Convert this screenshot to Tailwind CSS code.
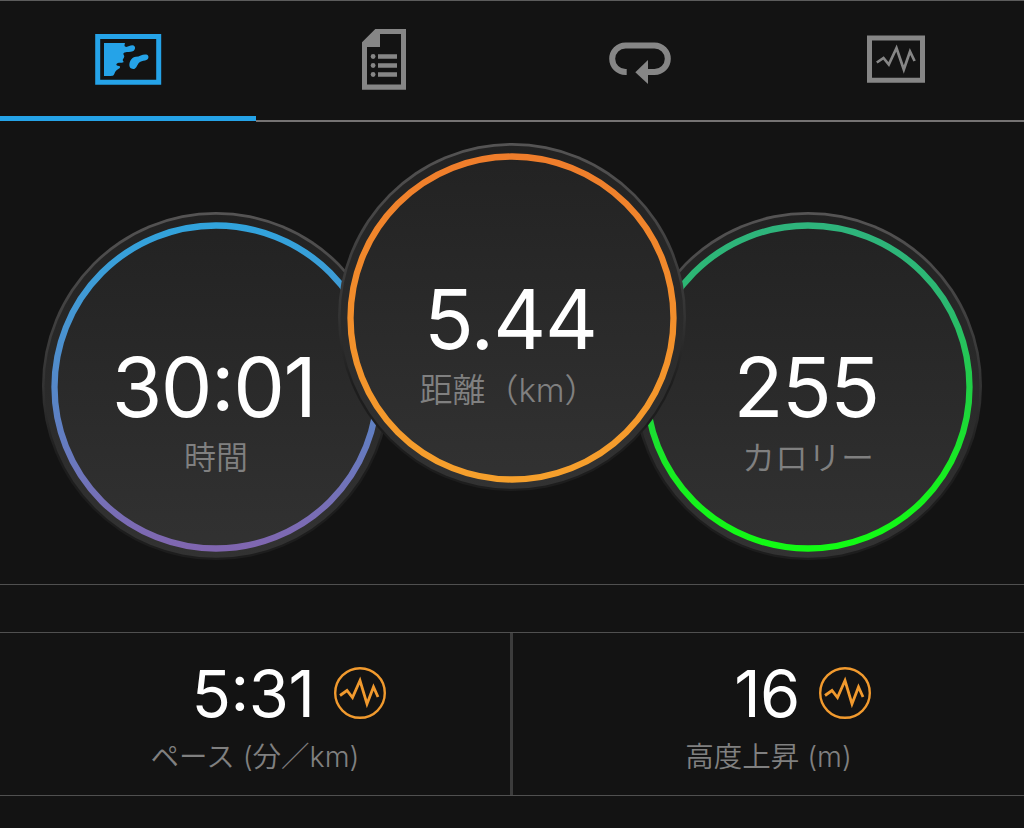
<!doctype html>
<html lang="ja">
<head>
  <meta charset="utf-8" />
  <meta name="viewport" content="width=device-width, initial-scale=1" />
  <title>アクティビティ</title>
  <script src="https://cdn.jsdelivr.net/npm/@tailwindcss/browser@4"></script>
</head>
<body class="bg-[#131313] text-white font-['Inter','Noto_Sans_CJK_JP',sans-serif] overflow-hidden">
  <div class="w-[1024px] h-[828px] flex flex-col border-t border-[#5c5c5c]">

    <!-- TABS -->
    <nav class="h-[121px] shrink-0 grid grid-cols-4 text-[#868686]">
      <button class="flex flex-col text-[#25a3e8]" type="button">
        <svg class="w-full h-[115px]" viewBox="0 1 256 115" fill="currentColor">
          <path fill="none" stroke="currentColor" stroke-width="5" d="M97.7 36.5h61v45.7h-61z" />
          <path d="M104 43h21c-.5 2-1 3.300.5 3.800 2.500.5 4-1.500 7-1.500 3.500.3 3.300 4.700.3 6-3 1.300-6.800-.2-8.800 1.500-1.800 1.700 1.200 2.500 0 4.700-1 1.800-2 2.500-.5 4 .5 1.500-2 1-4.500 1.300-3.500.5-3.500 3 0 3.300 2 .5 1 2.300-1 3.200-3.500 2-2.800 4-4.500 6-1 .7-2 .7-3.500.7H104z" />
          <path d="M146.200 54.500c2.800.5 3 4 .7 5.200-2.500 1.500-4.500.7-7 2.300-2.500 1.500-2.500 5.200-5.200 6.700-3 1-5.800-1-5.300-4.700.5-3.500 2.700-6.700 6.500-7.200 4-.3 6.800-3 10.300-2.300z" />
        </svg>
        <span class="h-[5px] w-full bg-[#25a3e8]"></span>
      </button>
      <button class="border-b-2 border-[#757373]" type="button">
        <svg class="w-full h-[119px]" viewBox="256 1 256 119" fill="currentColor">
          <path fill-rule="evenodd" d="M375.300 29H406v60.700h-44V42.300zM380 34v13h-13v37.500h34V34z" />
          <path d="M378 54.200h19v4.600h-19zM378 63.200h19v4.600h-19zM378 72.200h19v4.600h-19z" />
          <circle cx="373.100" cy="56.500" r="2.400" /><circle cx="373.100" cy="65.500" r="2.400" /><circle cx="373.100" cy="74.500" r="2.400" />
        </svg>
      </button>
      <button class="border-b-2 border-[#757373]" type="button">
        <svg class="w-full h-[119px]" viewBox="512 1 256 119" fill="currentColor">
          <path fill="none" stroke="currentColor" stroke-width="6" d="M626.700 72h-1.200a13.250 13.250 0 0 1 0-26.600h29a13.250 13.250 0 0 1 0 26.600h-8" />
          <path d="M635.300 72.200L648 60v24z" />
        </svg>
      </button>
      <button class="border-b-2 border-[#757373]" type="button">
        <svg class="w-full h-[119px]" viewBox="768 1 256 119" fill="none" stroke="currentColor">
          <path stroke-width="5" d="M869.500 38h53v42.300h-53z" />
          <path stroke-width="2.700" d="M876.800 62.500l6.700-4.500 5.300 6.500 7.700-16.500 7.300 21.500 6.200-18 4.600 9.500" />
        </svg>
      </button>
    </nav>

    <!-- DIALS -->
    <section class="h-[463px] shrink-0 flex justify-center items-start pt-[20.500px] border-b border-[#505050]">
      <div class="grid place-items-center mt-[69px]">
        <svg class="col-start-1 row-start-1 size-[350px]" viewBox="0 0 350 350">
          <defs>
            <linearGradient id="face" x1="0" y1="0" x2="0" y2="1"><stop offset="0" stop-color="#222222" /><stop offset="1" stop-color="#323232" /></linearGradient>
            <linearGradient id="rim" x1="0" y1="0" x2="0" y2="1"><stop offset="0" stop-color="#555454" /><stop offset=".5" stop-color="#333333" /><stop offset=".7" stop-color="#1d1d1d" /><stop offset="1" stop-color="#1d1d1d" /></linearGradient>
            <linearGradient id="blue" x1="0" y1="0" x2="0" y2="1"><stop offset="0" stop-color="#31a3dc" /><stop offset=".2" stop-color="#3f9bd6" /><stop offset=".55" stop-color="#5984c6" /><stop offset=".85" stop-color="#7670b7" /><stop offset="1" stop-color="#8066b0" /></linearGradient>
          </defs>
          <circle cx="175" cy="174" r="174" fill="url(#rim)" />
          <circle cx="175" cy="174.300" r="171.500" fill="url(#face)" />
          <circle cx="175" cy="175" r="161.500" fill="none" stroke="url(#blue)" stroke-width="6.300" />
        </svg>
        <div class="col-start-1 row-start-1 flex flex-col items-center pt-[52px]">
          <div class="text-[82px] leading-[82px] tracking-[-1.500px] pr-[5px]">30<span class="relative -top-[7px]">:</span>01</div>
          <div class="text-[32px] leading-[40px] mt-[9px] font-[350] text-[#808080]">時間</div>
        </div>
      </div>

      <div class="grid place-items-center -mx-[54px] z-10">
        <svg class="col-start-1 row-start-1 size-[350px]" viewBox="0 0 350 350">
          <defs>
            <linearGradient id="orange" x1="0" y1="0" x2="0" y2="1"><stop offset="0" stop-color="#ef7d2b" /><stop offset="1" stop-color="#f6a02c" /></linearGradient>
          </defs>
          <circle cx="175" cy="174" r="174" fill="url(#rim)" />
          <circle cx="175" cy="174.300" r="171.500" fill="url(#face)" />
          <circle cx="175" cy="175" r="161.500" fill="none" stroke="url(#orange)" stroke-width="6.300" />
        </svg>
        <div class="col-start-1 row-start-1 flex flex-col items-center pt-[53px]">
          <div class="text-[82px] leading-[82px] tracking-[-1px] pr-[3px]">5.44</div>
          <div class="text-[33px] leading-[40px] mt-[9px] pr-[7px] font-[350] text-[#808080]">距離（km）</div>
        </div>
      </div>

      <div class="grid place-items-center mt-[69px]">
        <svg class="col-start-1 row-start-1 size-[350px]" viewBox="0 0 350 350">
          <defs>
            <linearGradient id="green" x1="0" y1="0" x2="0" y2="1"><stop offset="0" stop-color="#2eb47c" /><stop offset=".25" stop-color="#2bb870" /><stop offset=".5" stop-color="#20cf45" /><stop offset=".75" stop-color="#17ec22" /><stop offset="1" stop-color="#12fb14" /></linearGradient>
          </defs>
          <circle cx="175" cy="174" r="174" fill="url(#rim)" />
          <circle cx="175" cy="174.300" r="171.500" fill="url(#face)" />
          <circle cx="175" cy="175" r="161.500" fill="none" stroke="url(#green)" stroke-width="6.300" />
        </svg>
        <div class="col-start-1 row-start-1 flex flex-col items-center pt-[52px]">
          <div class="text-[82px] leading-[82px] tracking-[-1.500px] pr-[4px]">255</div>
          <div class="text-[33px] leading-[40px] mt-[9px] font-[350] text-[#808080]">カロリー</div>
        </div>
      </div>
    </section>

    <!-- STATS -->
    <section class="mt-[47px] h-[164px] shrink-0 flex border-y border-[#505050]">
      <div class="w-[513px] border-r-3 border-[#3c3c3c] pt-[27px]">
        <div class="grid grid-cols-[1fr_auto_1fr] items-center">
          <div class="col-start-2 text-[65px] leading-[64px] pt-[2px] tracking-[-.500px] pr-[4px]">5<span class="relative -top-[6px]">:</span>31</div>
          <svg class="size-[52px] ml-[16px]" viewBox="0 0 52 52" fill="none" stroke="#f19a2e">
            <circle cx="26" cy="26" r="24.800" stroke-width="2.400" />
            <path stroke-width="2.800" d="M6 28.500l7-5 5.500 7 7.500-17 7 23.500 6.500-17 4.500 10" />
          </svg>
        </div>
        <div class="text-center text-[28.500px] leading-[36px] mt-[13px] font-[350] text-[#808080]">ペース (分／km)</div>
      </div>
      <div class="flex-1 pt-[27px]">
        <div class="grid grid-cols-[1fr_auto_1fr] items-center">
          <div class="col-start-2 text-[65px] leading-[64px] pt-[2px] tracking-[-.500px] pr-[3px]">16</div>
          <svg class="size-[52px] ml-[16px]" viewBox="0 0 52 52" fill="none" stroke="#f19a2e">
            <circle cx="26" cy="26" r="24.800" stroke-width="2.400" />
            <path stroke-width="2.800" d="M6 28.500l7-5 5.500 7 7.500-17 7 23.500 6.500-17 4.500 10" />
          </svg>
        </div>
        <div class="text-center text-[28.500px] leading-[36px] mt-[13px] font-[350] text-[#808080]">高度上昇 (m)</div>
      </div>
    </section>
  </div>
</body>
</html>
